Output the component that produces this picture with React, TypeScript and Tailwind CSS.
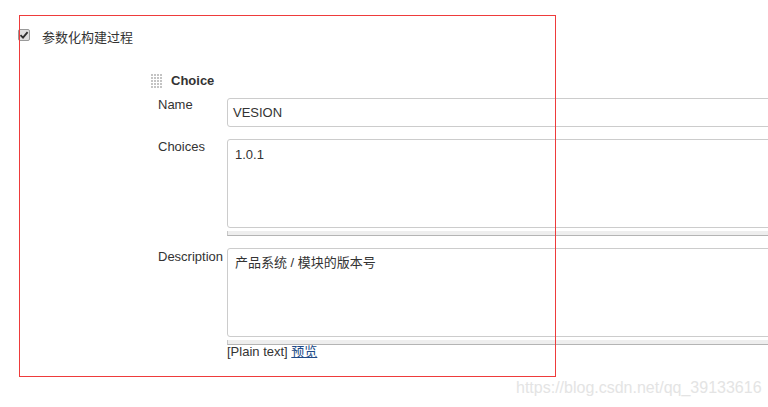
import React from "react";

const FONT = "font-['Liberation_Sans','Noto_Sans_CJK_SC',sans-serif]";

function Handle() {
  const dots: React.ReactNode[] = [];
  for (let r = 0; r < 5; r++) {
    for (let c = 0; c < 4; c++) {
      dots.push(<rect key={`${r}-${c}`} x={c * 3} y={r * 3} width={2} height={2} fill="#c4c4c4" />);
    }
  }
  return (
    <svg width="11" height="15" viewBox="0 0 11 15" className="mt-[1px] shrink-0">
      {dots}
    </svg>
  );
}

function Grip() {
  return <div className="mt-[3px] h-[5px] w-[560px] border-l border-b border-l-[#c8c8c8] border-b-[#b4b4b4] bg-[#eeeeee]" />;
}

export default function App() {
  return (
    <div className={`relative h-[407px] w-[768px] overflow-hidden bg-white text-[13px] leading-[16px] text-[#333333] ${FONT}`}>
      <div className="pl-[18px] pt-[29px]">
        {/* top checkbox row */}
        <div className="flex items-start">
          <div className="flex h-[12px] w-[12px] items-center justify-center rounded-[2px] border border-[#9a9a9a] bg-[#dedede]">
            <svg width="10" height="10" viewBox="0 0 10 10">
              <path d="M1.5 5.2 L4 7.6 L8.6 2.2" fill="none" stroke="#2e2e2e" strokeWidth="1.8" />
            </svg>
          </div>
          <span className="ml-[12px] mt-[1px]">参数化构建过程</span>
        </div>

        {/* Choice header */}
        <div className="ml-[133px] mt-[27px] flex items-start gap-[9px]">
          <Handle />
          <span className="font-bold">Choice</span>
        </div>

        {/* fields */}
        <div className="ml-[140px] mt-[9px] flex flex-col">
          <div className="flex items-start">
            <div className="w-[69px] shrink-0 -mt-[1px]">Name</div>
            <div className="flex h-[29px] w-[560px] shrink-0 items-center rounded-[3px] border border-[#cccccc] px-[5px]">
              VESION
            </div>
          </div>

          <div className="mt-[12px] flex items-start">
            <div className="w-[69px] shrink-0">Choices</div>
            <div className="flex flex-col">
              <div className="h-[89px] w-[560px] rounded-[3px] border border-[#cccccc] px-[7px] pt-[7px]">1.0.1</div>
              <Grip />
            </div>
          </div>

          <div className="mt-[12px] flex items-start">
            <div className="w-[69px] shrink-0 mt-[1px]">Description</div>
            <div className="flex flex-col">
              <div className="h-[89px] w-[560px] rounded-[3px] border border-[#cccccc] px-[7px] pt-[6px]">产品系统 / 模块的版本号</div>
              <Grip />
              <div className="-mt-[1px]">
                [Plain text] <span className="text-[#204a87] underline">预览</span>
              </div>
            </div>
          </div>
        </div>
      </div>

      {/* red annotation frame */}
      <div className="pointer-events-none absolute left-[19px] top-[15px] h-[362px] w-[537px] border border-[#ee3b3b]" />

      {/* watermark */}
      <div className="pointer-events-none absolute left-[516px] top-[379px] whitespace-nowrap text-[16px] leading-[18px] text-[#e4e4e4]">
        https://blog.csdn.net/qq_39133616
      </div>
    </div>
  );
}
